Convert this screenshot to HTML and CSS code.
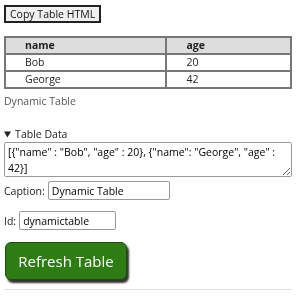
FILE: index.html
```html
<!DOCTYPE html>
<html lang="en">
<head>
    <meta charset="UTF-8">
    <title>Dynamic Table</title>
    <link rel="stylesheet" href="styles.css">
</head>
<body>
    <div class="page">
        <button class="copy-btn">Copy Table HTML</button>

        <table class="data-table" id="dynamictable">
            <thead>
                <tr><th>name</th><th>age</th></tr>
            </thead>
            <tbody>
                <tr><td>Bob</td><td>20</td></tr>
                <tr><td>George</td><td>42</td></tr>
            </tbody>
            <caption>Dynamic Table</caption>
        </table>

        <details open class="table-data">
            <summary>Table Data</summary>
            <textarea class="json-input">[{"name" : "Bob", "age" : 20}, {"name": "George", "age" : 42}]</textarea>
        </details>

        <div class="field">
            <label for="captionInput">Caption:</label>
            <input type="text" id="captionInput" class="caption-input" value="Dynamic Table">
        </div>
        <div class="field">
            <label for="idInput">Id:</label>
            <input type="text" id="idInput" class="id-input" value="dynamictable">
        </div>

        <button class="refresh-btn">Refresh Table</button>

        <hr class="divider">
    </div>
</body>
</html>
```

FILE: styles.css
```css
body {
    margin: 0;
    font-family: "Open Sans", Arial, sans-serif;
    font-size: 10.5px;
    color: #222;
    background: white;
}
.page {
    padding: 5px 8px 0 4px;
}
.copy-btn {
    font-family: inherit;
    font-size: 10.5px;
    padding: 0 4px;
    height: 18px;
    line-height: 14px;
    background: #f0f0f0;
    border: 2px solid #222;
    color: #111;
}
.data-table {
    margin-top: 13px;
    width: 100%;
    border-collapse: collapse;
    border: 2px solid #777;
}
.data-table caption {
    caption-side: bottom;
    text-align: left;
    color: #555;
    padding-top: 5px;
}
.data-table th,
.data-table td {
    border: 2px solid #777;
    text-align: left;
    padding: 0 19px;
    height: 15px;
    line-height: 15px;
}
.data-table th {
    background: #ddd;
}
.table-data {
    margin-top: 19px;
}
.table-data summary {
    cursor: pointer;
}
.json-input {
    display: block;
    box-sizing: border-box;
    width: 100%;
    height: 35px;
    margin-top: 1px;
    padding: 1px 3px;
    font-family: inherit;
    font-size: 10.5px;
    line-height: 16px;
    border: 1px solid #999;
    border-radius: 2px;
    resize: vertical;
}
.field {
    margin-top: 4px;
    display: flex;
    align-items: center;
    gap: 3px;
}
.field + .field {
    margin-top: 11px;
}
.field input {
    font-family: inherit;
    font-size: 10.5px;
    height: 19px;
    box-sizing: border-box;
    padding: 0 3px;
    border: 1px solid #999;
    border-radius: 2px;
}
.caption-input {
    width: 122px;
}
.id-input {
    width: 97px;
}
.refresh-btn {
    display: block;
    margin-top: 12px;
    margin-left: 1px;
    width: 122px;
    height: 38px;
    font-family: inherit;
    font-size: 15px;
    color: white;
    background: #2e7d14;
    border: 1px solid #1e4d0c;
    border-radius: 6px;
    box-shadow: 2px 3px 2px #333;
}
.divider {
    margin: 9px 0 0 0;
    border: none;
    border-top: 1px solid #ddd;
}
```
